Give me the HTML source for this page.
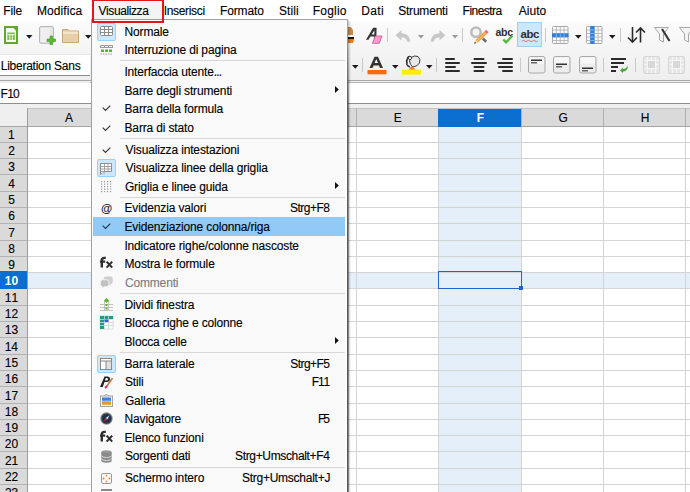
<!DOCTYPE html><html><head><meta charset="utf-8"><style>
html,body{margin:0;padding:0;}
body{width:690px;height:492px;overflow:hidden;position:relative;background:#fff;font-family:"Liberation Sans",sans-serif;}
.t{position:absolute;white-space:nowrap;line-height:20px;font-kerning:none;font-family:"Liberation Sans",sans-serif;}
svg{position:absolute;overflow:visible;}
</style></head><body>
<div style="position:absolute;left:0px;top:22px;width:690px;height:58px;background:linear-gradient(#fbfbfb,#f3f3f3 60%,#eeeeee)"></div>
<div style="position:absolute;left:0px;top:54px;width:90px;height:21px;background:#fff;border-top:1px solid #e6e6e6"></div>
<div style="position:absolute;left:0px;top:75px;width:90px;height:1px;background:#8c8c8c"></div>
<div style="position:absolute;left:0px;top:80px;width:690px;height:1px;background:#a8a8a8"></div>
<div style="position:absolute;left:0px;top:81px;width:690px;height:2px;background:#eeeeee"></div>
<div style="position:absolute;left:0px;top:83px;width:690px;height:20px;background:#fff"></div>
<div style="position:absolute;left:90px;top:82px;width:600px;height:1px;background:#b4b4b4"></div>
<div style="position:absolute;left:0px;top:103px;width:690px;height:1px;background:#8e8e8e"></div>
<div style="position:absolute;left:0px;top:104px;width:690px;height:5px;background:#f0f0f0"></div>
<div style="position:absolute;left:92px;top:0px;width:72px;height:20px;background:#f4f4f4"></div>
<div class="t" style="left:3.22px;top:1.00px;font-size:12px;letter-spacing:-0.106px;color:#000;-webkit-text-stroke:0.12px #000;">File</div>
<div class="t" style="left:36.92px;top:1.00px;font-size:12px;letter-spacing:0.100px;color:#000;-webkit-text-stroke:0.12px #000;">Modifica</div>
<div class="t" style="left:98.45px;top:1.00px;font-size:12px;letter-spacing:-0.397px;color:#000;-webkit-text-stroke:0.12px #000;">Visualizza</div>
<div class="t" style="left:163.79px;top:1.00px;font-size:12px;letter-spacing:-0.337px;color:#000;-webkit-text-stroke:0.12px #000;">Inserisci</div>
<div class="t" style="left:219.92px;top:1.00px;font-size:12px;letter-spacing:-0.098px;color:#000;-webkit-text-stroke:0.12px #000;">Formato</div>
<div class="t" style="left:278.96px;top:1.00px;font-size:12px;letter-spacing:0.079px;color:#000;-webkit-text-stroke:0.12px #000;">Stili</div>
<div class="t" style="left:312.82px;top:1.00px;font-size:12px;letter-spacing:0.181px;color:#000;-webkit-text-stroke:0.12px #000;">Foglio</div>
<div class="t" style="left:361.22px;top:1.00px;font-size:12px;letter-spacing:0.351px;color:#000;-webkit-text-stroke:0.12px #000;">Dati</div>
<div class="t" style="left:398.16px;top:1.00px;font-size:12px;letter-spacing:-0.200px;color:#000;-webkit-text-stroke:0.12px #000;">Strumenti</div>
<div class="t" style="left:462.62px;top:1.00px;font-size:12px;letter-spacing:-0.538px;color:#000;-webkit-text-stroke:0.12px #000;">Finestra</div>
<div class="t" style="left:518.68px;top:1.00px;font-size:12px;letter-spacing:0.044px;color:#000;-webkit-text-stroke:0.12px #000;">Aiuto</div>
<div style="position:absolute;left:0px;top:104px;width:27px;height:22px;background:#efefef"></div>
<div style="position:absolute;left:27px;top:108px;width:663px;height:18px;background:#dadada"></div>
<div style="position:absolute;left:27px;top:108px;width:663px;height:1px;background:#c4c4c4"></div>
<div style="position:absolute;left:0px;top:126px;width:690px;height:1px;background:#a6a6a6"></div>
<div style="position:absolute;left:0px;top:127px;width:27px;height:365px;background:#dadada"></div>
<div style="position:absolute;left:27px;top:108px;width:1px;height:384px;background:#9c9c9c"></div>
<div style="position:absolute;left:438px;top:127px;width:83px;height:365px;background:#e4effa"></div>
<div style="position:absolute;left:28px;top:272px;width:662px;height:16px;background:#e4effa"></div>
<div style="position:absolute;left:0px;top:142px;width:27px;height:1px;background:#b2b2b2"></div>
<div style="position:absolute;left:28px;top:142px;width:662px;height:1px;background:#d4d4d4"></div>
<div style="position:absolute;left:0px;top:158px;width:27px;height:1px;background:#b2b2b2"></div>
<div style="position:absolute;left:28px;top:158px;width:662px;height:1px;background:#d4d4d4"></div>
<div style="position:absolute;left:0px;top:174px;width:27px;height:1px;background:#b2b2b2"></div>
<div style="position:absolute;left:28px;top:174px;width:662px;height:1px;background:#d4d4d4"></div>
<div style="position:absolute;left:0px;top:191px;width:27px;height:1px;background:#b2b2b2"></div>
<div style="position:absolute;left:28px;top:191px;width:662px;height:1px;background:#d4d4d4"></div>
<div style="position:absolute;left:0px;top:207px;width:27px;height:1px;background:#b2b2b2"></div>
<div style="position:absolute;left:28px;top:207px;width:662px;height:1px;background:#d4d4d4"></div>
<div style="position:absolute;left:0px;top:223px;width:27px;height:1px;background:#b2b2b2"></div>
<div style="position:absolute;left:28px;top:223px;width:662px;height:1px;background:#d4d4d4"></div>
<div style="position:absolute;left:0px;top:240px;width:27px;height:1px;background:#b2b2b2"></div>
<div style="position:absolute;left:28px;top:240px;width:662px;height:1px;background:#d4d4d4"></div>
<div style="position:absolute;left:0px;top:256px;width:27px;height:1px;background:#b2b2b2"></div>
<div style="position:absolute;left:28px;top:256px;width:662px;height:1px;background:#d4d4d4"></div>
<div style="position:absolute;left:0px;top:272px;width:27px;height:1px;background:#b2b2b2"></div>
<div style="position:absolute;left:28px;top:272px;width:662px;height:1px;background:#d4d4d4"></div>
<div style="position:absolute;left:0px;top:288px;width:27px;height:1px;background:#b2b2b2"></div>
<div style="position:absolute;left:28px;top:288px;width:662px;height:1px;background:#d4d4d4"></div>
<div style="position:absolute;left:0px;top:305px;width:27px;height:1px;background:#b2b2b2"></div>
<div style="position:absolute;left:28px;top:305px;width:662px;height:1px;background:#d4d4d4"></div>
<div style="position:absolute;left:0px;top:321px;width:27px;height:1px;background:#b2b2b2"></div>
<div style="position:absolute;left:28px;top:321px;width:662px;height:1px;background:#d4d4d4"></div>
<div style="position:absolute;left:0px;top:337px;width:27px;height:1px;background:#b2b2b2"></div>
<div style="position:absolute;left:28px;top:337px;width:662px;height:1px;background:#d4d4d4"></div>
<div style="position:absolute;left:0px;top:354px;width:27px;height:1px;background:#b2b2b2"></div>
<div style="position:absolute;left:28px;top:354px;width:662px;height:1px;background:#d4d4d4"></div>
<div style="position:absolute;left:0px;top:370px;width:27px;height:1px;background:#b2b2b2"></div>
<div style="position:absolute;left:28px;top:370px;width:662px;height:1px;background:#d4d4d4"></div>
<div style="position:absolute;left:0px;top:386px;width:27px;height:1px;background:#b2b2b2"></div>
<div style="position:absolute;left:28px;top:386px;width:662px;height:1px;background:#d4d4d4"></div>
<div style="position:absolute;left:0px;top:403px;width:27px;height:1px;background:#b2b2b2"></div>
<div style="position:absolute;left:28px;top:403px;width:662px;height:1px;background:#d4d4d4"></div>
<div style="position:absolute;left:0px;top:419px;width:27px;height:1px;background:#b2b2b2"></div>
<div style="position:absolute;left:28px;top:419px;width:662px;height:1px;background:#d4d4d4"></div>
<div style="position:absolute;left:0px;top:435px;width:27px;height:1px;background:#b2b2b2"></div>
<div style="position:absolute;left:28px;top:435px;width:662px;height:1px;background:#d4d4d4"></div>
<div style="position:absolute;left:0px;top:451px;width:27px;height:1px;background:#b2b2b2"></div>
<div style="position:absolute;left:28px;top:451px;width:662px;height:1px;background:#d4d4d4"></div>
<div style="position:absolute;left:0px;top:468px;width:27px;height:1px;background:#b2b2b2"></div>
<div style="position:absolute;left:28px;top:468px;width:662px;height:1px;background:#d4d4d4"></div>
<div style="position:absolute;left:0px;top:484px;width:27px;height:1px;background:#b2b2b2"></div>
<div style="position:absolute;left:28px;top:484px;width:662px;height:1px;background:#d4d4d4"></div>
<div style="position:absolute;left:109px;top:108px;width:1px;height:18px;background:#b0b0b0"></div>
<div style="position:absolute;left:109px;top:127px;width:1px;height:365px;background:#d4d4d4"></div>
<div style="position:absolute;left:192px;top:108px;width:1px;height:18px;background:#b0b0b0"></div>
<div style="position:absolute;left:192px;top:127px;width:1px;height:365px;background:#d4d4d4"></div>
<div style="position:absolute;left:274px;top:108px;width:1px;height:18px;background:#b0b0b0"></div>
<div style="position:absolute;left:274px;top:127px;width:1px;height:365px;background:#d4d4d4"></div>
<div style="position:absolute;left:356px;top:108px;width:1px;height:18px;background:#b0b0b0"></div>
<div style="position:absolute;left:356px;top:127px;width:1px;height:365px;background:#d4d4d4"></div>
<div style="position:absolute;left:438px;top:108px;width:1px;height:18px;background:#b0b0b0"></div>
<div style="position:absolute;left:438px;top:127px;width:1px;height:365px;background:#d4d4d4"></div>
<div style="position:absolute;left:521px;top:108px;width:1px;height:18px;background:#b0b0b0"></div>
<div style="position:absolute;left:521px;top:127px;width:1px;height:365px;background:#d4d4d4"></div>
<div style="position:absolute;left:603px;top:108px;width:1px;height:18px;background:#b0b0b0"></div>
<div style="position:absolute;left:603px;top:127px;width:1px;height:365px;background:#d4d4d4"></div>
<div style="position:absolute;left:685px;top:108px;width:1px;height:18px;background:#b0b0b0"></div>
<div style="position:absolute;left:685px;top:127px;width:1px;height:365px;background:#d4d4d4"></div>
<div style="position:absolute;left:438px;top:108.5px;width:83px;height:18px;background:#0a6fd0"></div>
<div style="position:absolute;left:0px;top:270.5px;width:27px;height:18.5px;background:#0a6fd0"></div>
<div class="t" style="left:65.00px;top:108.00px;font-size:12px;letter-spacing:0.000px;color:#000;-webkit-text-stroke:0.12px #000;">A</div>
<div class="t" style="left:147.32px;top:108.00px;font-size:12px;letter-spacing:0.000px;color:#000;-webkit-text-stroke:0.12px #000;">B</div>
<div class="t" style="left:229.59px;top:108.00px;font-size:12px;letter-spacing:0.000px;color:#000;-webkit-text-stroke:0.12px #000;">C</div>
<div class="t" style="left:311.46px;top:108.00px;font-size:12px;letter-spacing:0.000px;color:#000;-webkit-text-stroke:0.12px #000;">D</div>
<div class="t" style="left:393.76px;top:108.00px;font-size:12px;letter-spacing:0.000px;color:#000;-webkit-text-stroke:0.12px #000;">E</div>
<div class="t" style="left:476.65px;top:108.00px;font-size:12px;letter-spacing:0.000px;color:#fff;font-weight:bold;">F</div>
<div class="t" style="left:558.48px;top:108.00px;font-size:12px;letter-spacing:0.000px;color:#000;-webkit-text-stroke:0.12px #000;">G</div>
<div class="t" style="left:640.66px;top:108.00px;font-size:12px;letter-spacing:0.000px;color:#000;-webkit-text-stroke:0.12px #000;">H</div>
<div class="t" style="left:8.10px;top:125.00px;font-size:12px;letter-spacing:0.000px;color:#000;-webkit-text-stroke:0.12px #000;">1</div>
<div class="t" style="left:8.26px;top:141.00px;font-size:12px;letter-spacing:0.000px;color:#000;-webkit-text-stroke:0.12px #000;">2</div>
<div class="t" style="left:8.30px;top:157.00px;font-size:12px;letter-spacing:0.000px;color:#000;-webkit-text-stroke:0.12px #000;">3</div>
<div class="t" style="left:8.30px;top:174.00px;font-size:12px;letter-spacing:0.000px;color:#000;-webkit-text-stroke:0.12px #000;">4</div>
<div class="t" style="left:8.27px;top:190.00px;font-size:12px;letter-spacing:0.000px;color:#000;-webkit-text-stroke:0.12px #000;">5</div>
<div class="t" style="left:8.22px;top:206.00px;font-size:12px;letter-spacing:0.000px;color:#000;-webkit-text-stroke:0.12px #000;">6</div>
<div class="t" style="left:8.26px;top:223.00px;font-size:12px;letter-spacing:0.000px;color:#000;-webkit-text-stroke:0.12px #000;">7</div>
<div class="t" style="left:8.26px;top:239.00px;font-size:12px;letter-spacing:0.000px;color:#000;-webkit-text-stroke:0.12px #000;">8</div>
<div class="t" style="left:8.27px;top:255.00px;font-size:12px;letter-spacing:0.000px;color:#000;-webkit-text-stroke:0.12px #000;">9</div>
<div class="t" style="left:4.79px;top:271.00px;font-size:12px;letter-spacing:0.000px;color:#fff;font-weight:bold;">10</div>
<div class="t" style="left:4.76px;top:288.00px;font-size:12px;letter-spacing:0.000px;color:#000;-webkit-text-stroke:0.12px #000;">11</div>
<div class="t" style="left:4.77px;top:304.00px;font-size:12px;letter-spacing:0.000px;color:#000;-webkit-text-stroke:0.12px #000;">12</div>
<div class="t" style="left:4.73px;top:320.00px;font-size:12px;letter-spacing:0.000px;color:#000;-webkit-text-stroke:0.12px #000;">13</div>
<div class="t" style="left:4.64px;top:337.00px;font-size:12px;letter-spacing:0.000px;color:#000;-webkit-text-stroke:0.12px #000;">14</div>
<div class="t" style="left:4.72px;top:353.00px;font-size:12px;letter-spacing:0.000px;color:#000;-webkit-text-stroke:0.12px #000;">15</div>
<div class="t" style="left:4.73px;top:369.00px;font-size:12px;letter-spacing:0.000px;color:#000;-webkit-text-stroke:0.12px #000;">16</div>
<div class="t" style="left:4.77px;top:386.00px;font-size:12px;letter-spacing:0.000px;color:#000;-webkit-text-stroke:0.12px #000;">17</div>
<div class="t" style="left:4.73px;top:402.00px;font-size:12px;letter-spacing:0.000px;color:#000;-webkit-text-stroke:0.12px #000;">18</div>
<div class="t" style="left:4.75px;top:418.00px;font-size:12px;letter-spacing:0.000px;color:#000;-webkit-text-stroke:0.12px #000;">19</div>
<div class="t" style="left:4.86px;top:434.00px;font-size:12px;letter-spacing:0.000px;color:#000;-webkit-text-stroke:0.12px #000;">20</div>
<div class="t" style="left:4.92px;top:451.00px;font-size:12px;letter-spacing:0.000px;color:#000;-webkit-text-stroke:0.12px #000;">21</div>
<div class="t" style="left:4.93px;top:467.00px;font-size:12px;letter-spacing:0.000px;color:#000;-webkit-text-stroke:0.12px #000;">22</div>
<div class="t" style="left:4.89px;top:483.00px;font-size:12px;letter-spacing:0.000px;color:#000;-webkit-text-stroke:0.12px #000;">23</div>
<div style="position:absolute;left:438px;top:271px;width:84px;height:18px;border:1.5px solid #1f63d3;box-sizing:border-box"></div>
<div style="position:absolute;left:519px;top:286px;width:4px;height:4px;background:#1f63d3"></div>
<div class="t" style="left:0.72px;top:56.00px;font-size:12px;letter-spacing:-0.248px;color:#000;-webkit-text-stroke:0.12px #000;">Liberation Sans</div>
<div class="t" style="left:0.62px;top:84.00px;font-size:12px;letter-spacing:-0.762px;color:#000;-webkit-text-stroke:0.12px #000;">F10</div>
<svg style="left:4px;top:26px" width="14" height="18" viewBox="0 0 14 18"><rect x="0" y="0" width="14" height="18" fill="#5fa82c"/><path d="M2 2H9.5L12 4.5V16H2Z" fill="#f6faf2"/><rect x="3.3" y="6.5" width="7.5" height="7.5" fill="#7fbf4f"/><path d="M3.3 8.6H10.8M5.8 8.6V14M8.3 8.6V14" stroke="#f6faf2" stroke-width="0.9"/></svg>
<svg style="left:25.5px;top:35px" width="7" height="4" viewBox="0 0 7 4"><path d="M0 0H6.5L3.25 3.8Z" fill="#1a1a1a"/></svg>
<svg style="left:39px;top:26px" width="18" height="19" viewBox="0 0 18 19"><rect x="0.5" y="0.5" width="14" height="16.8" rx="1.5" fill="#e4e4e4" stroke="#b8b8b8"/><rect x="2" y="2" width="9" height="14" fill="#efefef"/><path d="M11 10V13H8V15.5H11V18.5H13.5V15.5H16.5V13H13.5V10Z" fill="#5db836" stroke="#3f9a20" stroke-width="0.6"/></svg>
<svg style="left:62px;top:28px" width="18" height="15" viewBox="0 0 18 15"><path d="M0.5 1.5H6L7.5 3H16.5V14.5H0.5Z" fill="#e3c69c" stroke="#c9a878"/><rect x="1" y="3.5" width="15" height="3" fill="#f3e4cc"/><rect x="1" y="6" width="15" height="8" fill="#e8cfa8"/></svg>
<svg style="left:85px;top:35px" width="7" height="4" viewBox="0 0 7 4"><path d="M0 0H6.5L3.25 3.8Z" fill="#1a1a1a"/></svg>
<svg style="left:348px;top:26px" width="8" height="18" viewBox="0 0 8 18"><path d="M0 1H3L5 4V9H0Z" fill="#c98a48"/><rect x="0" y="9" width="6" height="2" fill="#fff"/><rect x="0" y="11" width="6" height="2.5" fill="#1a1a1a"/><path d="M0 13.5H6L5 17H0Z" fill="#f07a10"/></svg>
<svg style="left:365px;top:27px" width="18" height="17" viewBox="0 0 18 17"><path fill-rule="evenodd" d="M1 12.8L8.2 0.8H11.6L11.3 12.8H9.1L9.2 9.6H5.4L3.5 12.8Z M6.6 7.6H9.3L9.5 3.2Z" fill="#333"/><path d="M7.5 16.3L10.3 9H17L14.2 16.3Z" fill="#f5a0cc" stroke="#e2559e" stroke-width="0.9" stroke-linejoin="round"/></svg>
<div style="position:absolute;left:387px;top:28px;width:1px;height:14px;background:#c8c8c8"></div>
<svg style="left:395px;top:30px" width="16" height="12" viewBox="0 0 16 12"><path d="M6.5 0L0.5 5.2L6.5 10.4V7.2C9.5 7.2 11.5 8.5 12.3 11.8H15.2C15 6.5 11.5 3.4 6.5 3.3Z" fill="#c8c8c8"/></svg>
<svg style="left:418px;top:35px" width="7" height="4" viewBox="0 0 7 4"><path d="M0 0H6L3 3.5Z" fill="#9a9a9a"/></svg>
<svg style="left:430px;top:30px" width="16" height="12" viewBox="0 0 16 12"><path d="M9.5 0L15.5 5.2L9.5 10.4V7.2C6.5 7.2 4.5 8.5 3.7 11.8H0.8C1 6.5 4.5 3.4 9.5 3.3Z" fill="#c8c8c8"/></svg>
<svg style="left:452px;top:35px" width="7" height="4" viewBox="0 0 7 4"><path d="M0 0H6L3 3.5Z" fill="#9a9a9a"/></svg>
<div style="position:absolute;left:462px;top:28px;width:1px;height:14px;background:#c8c8c8"></div>
<svg style="left:469px;top:25px" width="20" height="20" viewBox="0 0 20 20"><circle cx="7" cy="7.2" r="4.7" fill="#f6f6f6" stroke="#bcbcbc" stroke-width="2.6"/><path d="M13.8 13.5L17.2 16.8" stroke="#6e6e6e" stroke-width="2.6"/><path d="M7.8 16.2L16.8 7.6" stroke="#eea13a" stroke-width="3.4"/><path d="M7.8 16.2L16.8 7.6" stroke="#f9c46a" stroke-width="1"/><path d="M16.8 7.6L18.4 6" stroke="#f0609a" stroke-width="3.4"/><path d="M5.2 18.8L6.3 14.9L9.3 17.6Z" fill="#f3d9a8"/><path d="M5.2 18.8L5.8 16.7L7.2 18Z" fill="#222"/></svg>
<svg style="left:495px;top:27px" width="20" height="17" viewBox="0 0 20 17"><text x="0.5" y="8.6" font-family="Liberation Sans" font-weight="bold" font-size="10.5" letter-spacing="-0.3" fill="#2e2e2e">abc</text><path d="M8.3 12.5L11 15.3L17.5 8.8" stroke="#52b83c" stroke-width="2.3" fill="none"/></svg>
<div style="position:absolute;left:517px;top:22px;width:25px;height:25px;background:#cce8ff;border:1px solid #99d1ff;box-sizing:border-box"></div>
<svg style="left:520px;top:28px" width="20" height="16" viewBox="0 0 20 16"><text x="0.5" y="10" font-family="Liberation Sans" font-weight="bold" font-size="11.5" letter-spacing="-0.4" fill="#2e2e2e">abc</text><path d="M2 13Q3.3 11.8 4.6 13T7.2 13T9.8 13T12.4 13T15 13T17.6 13" stroke="#f05a5a" stroke-width="0.9" fill="none"/></svg>
<div style="position:absolute;left:545px;top:28px;width:1px;height:14px;background:#c8c8c8"></div>
<svg style="left:552px;top:26px" width="17" height="18" viewBox="0 0 17 18"><rect x="0.5" y="0.5" width="15.5" height="17" rx="1" fill="#fcfcfc" stroke="#a8a8a8"/><path d="M0.5 4H16M0.5 7.5H16M0.5 11H16M0.5 14.5H16M4.4 0.5V17.5M8.25 0.5V17.5M12.1 0.5V17.5" stroke="#b4b4b4" stroke-width="0.9"/><rect x="0" y="7.3" width="16.5" height="3.9" fill="#2f80dc"/><path d="M4.4 7.5V11M8.25 7.5V11M12.1 7.5V11" stroke="#8cc0f4" stroke-width="0.9"/></svg>
<svg style="left:575px;top:35px" width="7" height="4" viewBox="0 0 7 4"><path d="M0 0H6.5L3.25 3.8Z" fill="#1a1a1a"/></svg>
<svg style="left:586px;top:26px" width="17" height="18" viewBox="0 0 17 18"><rect x="0.5" y="0.5" width="15.5" height="17" rx="1" fill="#fcfcfc" stroke="#a8a8a8"/><path d="M0.5 4H16M0.5 7.5H16M0.5 11H16M0.5 14.5H16M4.4 0.5V17.5M8.25 0.5V17.5M12.1 0.5V17.5" stroke="#b4b4b4" stroke-width="0.9"/><rect x="4.2" y="0" width="4.3" height="18" fill="#2f80dc"/><path d="M4.4 4H8.3M4.4 7.5H8.3M4.4 11H8.3M4.4 14.5H8.3" stroke="#8cc0f4" stroke-width="0.9"/></svg>
<svg style="left:609px;top:35px" width="7" height="4" viewBox="0 0 7 4"><path d="M0 0H6.5L3.25 3.8Z" fill="#1a1a1a"/></svg>
<div style="position:absolute;left:620px;top:28px;width:1px;height:14px;background:#c8c8c8"></div>
<svg style="left:627px;top:27px" width="20" height="16" viewBox="0 0 20 16"><path d="M5.5 0V15M1 10.5L5.5 15L10 10.5M13.5 15.5V1M9 5.5L13.5 1L18 5.5" stroke="#2a2a2a" stroke-width="1.6" fill="none"/></svg>
<svg style="left:654px;top:27px" width="17" height="16" viewBox="0 0 17 16"><path d="M0.5 0.5H14.5L9.5 7V15L5.5 13V7Z" fill="#f4f4f4" stroke="#a8a8a8"/><path d="M8 2L15.5 14" stroke="#333" stroke-width="2"/></svg>
<svg style="left:679px;top:27px" width="17" height="16" viewBox="0 0 17 16"><path d="M0.5 0.5H14.5L9.5 7V15L5.5 13V7Z" fill="#f4f4f4" stroke="#a8a8a8"/></svg>
<svg style="left:351.5px;top:65px" width="7" height="4" viewBox="0 0 7 4"><path d="M0 0H6.5L3.25 3.8Z" fill="#1a1a1a"/></svg>
<div style="position:absolute;left:362px;top:58px;width:1px;height:14px;background:#c8c8c8"></div>
<svg style="left:367px;top:56px" width="20" height="19" viewBox="0 0 20 19"><path d="M2.5 12L7.5 0.8H11L16 12H13L12 9.5H6.6L5.5 12Z M7.5 7H11L9.25 3Z" fill="#333"/><rect x="0.5" y="14" width="19" height="4.3" fill="#ff6a00"/></svg>
<svg style="left:391.5px;top:65px" width="7" height="4" viewBox="0 0 7 4"><path d="M0 0H6.5L3.25 3.8Z" fill="#1a1a1a"/></svg>
<svg style="left:402px;top:55px" width="20" height="20" viewBox="0 0 20 20"><path d="M9 2.5Q12.5 0 16 1.5Q19 4 17.5 8Q15.5 11.5 11 12Q8 10 7.5 6Z" fill="#e8e8e8" stroke="#3a3a3a" stroke-width="1"/><path d="M8.5 1.8Q6 1 5.5 3.5Q4 6 5 9.5Q6 11.5 8 12" fill="none" stroke="#333" stroke-width="1.6"/><circle cx="8" cy="3" r="1.6" fill="#fff" stroke="#333" stroke-width="0.9"/><path d="M6.5 14.8Q8.5 12 10 11Q11 12.5 14 14.8Z" fill="#e8801c"/><rect x="0" y="14.7" width="19" height="5" fill="#ffee00"/></svg>
<svg style="left:426px;top:65px" width="7" height="4" viewBox="0 0 7 4"><path d="M0 0H6.5L3.25 3.8Z" fill="#1a1a1a"/></svg>
<div style="position:absolute;left:436px;top:58px;width:1px;height:14px;background:#c8c8c8"></div>
<svg style="left:445px;top:58px" width="17" height="16" viewBox="0 0 17 16"><rect x="0" y="0" width="10" height="2" rx="1" fill="#2a2a2a"/><rect x="0" y="4" width="15" height="2" rx="1" fill="#2a2a2a"/><rect x="0" y="8" width="11" height="2" rx="1" fill="#2a2a2a"/><rect x="0" y="12" width="15" height="2" rx="1" fill="#2a2a2a"/></svg>
<svg style="left:471px;top:58px" width="17" height="16" viewBox="0 0 17 16"><rect x="2.5" y="0" width="11" height="2" rx="1" fill="#2a2a2a"/><rect x="0" y="4" width="16" height="2" rx="1" fill="#2a2a2a"/><rect x="2.5" y="8" width="11" height="2" rx="1" fill="#2a2a2a"/><rect x="2.5" y="12" width="11" height="2" rx="1" fill="#2a2a2a"/></svg>
<svg style="left:496.5px;top:58px" width="17" height="16" viewBox="0 0 17 16"><rect x="5" y="0" width="11" height="2" rx="1" fill="#2a2a2a"/><rect x="0" y="4" width="16" height="2" rx="1" fill="#2a2a2a"/><rect x="1" y="8" width="15" height="2" rx="1" fill="#2a2a2a"/><rect x="5" y="12" width="11" height="2" rx="1" fill="#2a2a2a"/></svg>
<div style="position:absolute;left:519.5px;top:58px;width:1px;height:14px;background:#c8c8c8"></div>
<svg style="left:527.5px;top:56px" width="18" height="18" viewBox="0 0 18 18"><rect x="0.5" y="0.5" width="16.5" height="16.5" rx="2" fill="#ececec" stroke="#a8a8a8"/><rect x="1.5" y="1.5" width="14.5" height="6" fill="#f8f8f8"/><rect x="3" y="3.5" width="11" height="1.5" fill="#333"/><rect x="3" y="6.0" width="6" height="1.5" fill="#666"/></svg>
<svg style="left:553px;top:56px" width="18" height="18" viewBox="0 0 18 18"><rect x="0.5" y="0.5" width="16.5" height="16.5" rx="2" fill="#ececec" stroke="#a8a8a8"/><rect x="1.5" y="1.5" width="14.5" height="6" fill="#f8f8f8"/><rect x="3" y="7.5" width="11" height="1.5" fill="#333"/><rect x="3" y="10.0" width="6" height="1.5" fill="#666"/></svg>
<svg style="left:579px;top:56px" width="18" height="18" viewBox="0 0 18 18"><rect x="0.5" y="0.5" width="16.5" height="16.5" rx="2" fill="#ececec" stroke="#a8a8a8"/><rect x="1.5" y="1.5" width="14.5" height="6" fill="#f8f8f8"/><rect x="3" y="11.5" width="11" height="1.5" fill="#333"/><rect x="3" y="14.0" width="6" height="1.5" fill="#666"/></svg>
<div style="position:absolute;left:602.5px;top:58px;width:1px;height:14px;background:#c8c8c8"></div>
<svg style="left:611px;top:58px" width="18" height="15" viewBox="0 0 18 15"><rect x="0" y="0" width="15" height="2" fill="#2a2a2a"/><rect x="0" y="4" width="13" height="2" fill="#2a2a2a"/><rect x="0" y="8" width="7" height="2" fill="#2a2a2a"/><rect x="0" y="12" width="5" height="2" fill="#2a2a2a"/><path d="M9 12.5L12 9.5L12 11C14 11 16 10 16.5 7.5C17.5 11 15 13.5 12 13.5V15Z" fill="#4aa83a"/></svg>
<div style="position:absolute;left:634.5px;top:58px;width:1px;height:14px;background:#c8c8c8"></div>
<svg style="left:642.5px;top:56px" width="17" height="18" viewBox="0 0 17 18"><rect x="0.5" y="0.5" width="16" height="17" rx="1.5" fill="#e6e6e6" stroke="#d6d6d6"/><path d="M4.5 1V17M8.5 1V17M12.5 1V17M1 4.5H16M1 8.5H16M1 12.5H16" stroke="#f6f6f6" stroke-width="1.1"/><rect x="5" y="5" width="7" height="7" fill="#d8d8d8"/></svg>
<svg style="left:668px;top:56px" width="17" height="18" viewBox="0 0 17 18"><rect x="0.5" y="0.5" width="16" height="17" rx="1.5" fill="#e6e6e6" stroke="#d6d6d6"/><path d="M4.5 1V17M8.5 1V17M12.5 1V17M1 4.5H16M1 8.5H16M1 12.5H16" stroke="#f6f6f6" stroke-width="1.1"/><rect x="5" y="5" width="7" height="7" fill="#d8d8d8"/></svg>
<div style="position:absolute;left:91px;top:19px;width:256px;height:473px;background:#f9f9f9;border-left:1px solid #a0a0a0;border-top:1px solid #a0a0a0;box-sizing:border-box"></div>
<div style="position:absolute;left:345px;top:20px;width:2px;height:472px;background:#fdfdfd"></div>
<div style="position:absolute;left:347px;top:19px;width:1px;height:473px;background:linear-gradient(#a8a8a8,#606060 80px,#585858)"></div>
<div style="position:absolute;left:348px;top:20px;width:1px;height:472px;background:linear-gradient(rgba(0,0,0,0.15),rgba(0,0,0,0.45) 80px,rgba(0,0,0,0.5))"></div>
<div style="position:absolute;left:349px;top:21px;width:2px;height:471px;background:linear-gradient(90deg,rgba(0,0,0,0.18),rgba(0,0,0,0))"></div>
<div style="position:absolute;left:92px;top:-1px;width:72px;height:24px;border:2px solid #e8141c;box-sizing:border-box"></div>
<div style="position:absolute;left:97px;top:22.5px;width:19px;height:18.5px;background:#cce8ff;border:1px solid #99d1ff;box-sizing:border-box;border-radius:2px"></div>
<svg style="left:100px;top:26px" width="13" height="10" viewBox="0 0 13 10"><rect x="0.5" y="0.5" width="12" height="9" rx="1" fill="#fff" stroke="#8a8a8a"/><path d="M0.5 3.5H12.5M0.5 6.5H12.5M4.5 0.5V9.5M8.5 0.5V9.5" stroke="#8a8a8a"/></svg>
<div class="t" style="left:124.52px;top:22.00px;font-size:12px;letter-spacing:-0.150px;color:#000;-webkit-text-stroke:0.12px #000;">Normale</div>
<svg style="left:100px;top:45px" width="13" height="10" viewBox="0 0 13 10"><path d="M0.5 3V0.5H4M4.5 0.5H8M8.5 0.5H12.5V3M4.5 0.5V3M8.5 0.5V3M0.5 2.5H12.5" stroke="#9a9a9a" fill="none"/><rect x="1" y="4.5" width="3" height="2.5" fill="#5db42a"/><rect x="5" y="4.5" width="3" height="2.5" fill="#5db42a"/><rect x="9" y="4.5" width="3" height="2.5" fill="#5db42a"/><path d="M0.5 9H12.5" stroke="#9a9a9a" stroke-dasharray="1.5 1"/></svg>
<div class="t" style="left:124.39px;top:40.00px;font-size:12px;letter-spacing:-0.150px;color:#000;-webkit-text-stroke:0.12px #000;">Interruzione di pagina</div>
<div style="position:absolute;left:120px;top:60px;width:225px;height:1px;background:#d8d8d8"></div>
<div class="t" style="left:124.39px;top:62.00px;font-size:12px;letter-spacing:-0.150px;color:#000;-webkit-text-stroke:0.12px #000;">Interfaccia utente</div>
<div class="t" style="left:213.70px;top:62.00px;font-size:12px;letter-spacing:-0.805px;color:#000;-webkit-text-stroke:0.12px #000;">...</div>
<div class="t" style="left:124.52px;top:81.00px;font-size:12px;letter-spacing:-0.150px;color:#000;-webkit-text-stroke:0.12px #000;">Barre degli strumenti</div>
<svg style="left:335px;top:85.5px" width="4" height="7" viewBox="0 0 4 7"><path d="M0 0L3.8 3.5L0 7Z" fill="#111"/></svg>
<svg style="left:102px;top:105px" width="9" height="7" viewBox="0 0 9 7"><path d="M0.7 2.6L3.5 5.4L8.3 0.6" stroke="#3a3a3a" stroke-width="1.25" fill="none"/></svg>
<div class="t" style="left:124.52px;top:99.00px;font-size:12px;letter-spacing:-0.150px;color:#000;-webkit-text-stroke:0.12px #000;">Barra della formula</div>
<svg style="left:102px;top:125px" width="9" height="7" viewBox="0 0 9 7"><path d="M0.7 2.6L3.5 5.4L8.3 0.6" stroke="#3a3a3a" stroke-width="1.25" fill="none"/></svg>
<div class="t" style="left:124.52px;top:118.00px;font-size:12px;letter-spacing:-0.150px;color:#000;-webkit-text-stroke:0.12px #000;">Barra di stato</div>
<div style="position:absolute;left:120px;top:138px;width:225px;height:1px;background:#d8d8d8"></div>
<svg style="left:102px;top:147px" width="9" height="7" viewBox="0 0 9 7"><path d="M0.7 2.6L3.5 5.4L8.3 0.6" stroke="#3a3a3a" stroke-width="1.25" fill="none"/></svg>
<div class="t" style="left:125.45px;top:140.00px;font-size:12px;letter-spacing:-0.150px;color:#000;-webkit-text-stroke:0.12px #000;">Visualizza intestazioni</div>
<div style="position:absolute;left:97px;top:158.5px;width:19px;height:18.5px;background:#cce8ff;border:1px solid #99d1ff;box-sizing:border-box;border-radius:2px"></div>
<svg style="left:100px;top:163px" width="12" height="12" viewBox="0 0 12 12"><path d="M0.5 0.5H11.5V8.5H4L0.5 11.5Z" fill="#fff" stroke="#8c8c8c"/><path d="M0.5 3.5H11.5M0.5 6H11.5M4.5 0.5V8.5M8 0.5V8.5" stroke="#9a9a9a" stroke-width="0.9"/><path d="M0.5 8.5H4V11.5" fill="#e8e8e8" stroke="#8c8c8c" stroke-width="0.8"/></svg>
<div class="t" style="left:125.45px;top:158.00px;font-size:12px;letter-spacing:-0.150px;color:#000;-webkit-text-stroke:0.12px #000;">Visualizza linee della griglia</div>
<svg style="left:101px;top:180.5px" width="11" height="12" viewBox="0 0 11 12"><rect x="0" y="0.0" width="1.2" height="1.2" fill="#9a9a9a"/><rect x="0" y="2.5" width="1.2" height="1.2" fill="#9a9a9a"/><rect x="0" y="5.0" width="1.2" height="1.2" fill="#9a9a9a"/><rect x="0" y="7.5" width="1.2" height="1.2" fill="#9a9a9a"/><rect x="0" y="10.0" width="1.2" height="1.2" fill="#9a9a9a"/><rect x="3" y="0.0" width="1.2" height="1.2" fill="#9a9a9a"/><rect x="3" y="2.5" width="1.2" height="1.2" fill="#9a9a9a"/><rect x="3" y="5.0" width="1.2" height="1.2" fill="#9a9a9a"/><rect x="3" y="7.5" width="1.2" height="1.2" fill="#9a9a9a"/><rect x="3" y="10.0" width="1.2" height="1.2" fill="#9a9a9a"/><rect x="6" y="0.0" width="1.2" height="1.2" fill="#9a9a9a"/><rect x="6" y="2.5" width="1.2" height="1.2" fill="#9a9a9a"/><rect x="6" y="5.0" width="1.2" height="1.2" fill="#9a9a9a"/><rect x="6" y="7.5" width="1.2" height="1.2" fill="#9a9a9a"/><rect x="6" y="10.0" width="1.2" height="1.2" fill="#9a9a9a"/><rect x="9" y="0.0" width="1.2" height="1.2" fill="#9a9a9a"/><rect x="9" y="2.5" width="1.2" height="1.2" fill="#9a9a9a"/><rect x="9" y="5.0" width="1.2" height="1.2" fill="#9a9a9a"/><rect x="9" y="7.5" width="1.2" height="1.2" fill="#9a9a9a"/><rect x="9" y="10.0" width="1.2" height="1.2" fill="#9a9a9a"/></svg>
<div class="t" style="left:124.90px;top:177.00px;font-size:12px;letter-spacing:-0.150px;color:#000;-webkit-text-stroke:0.12px #000;">Griglia e linee guida</div>
<svg style="left:335px;top:181.5px" width="4" height="7" viewBox="0 0 4 7"><path d="M0 0L3.8 3.5L0 7Z" fill="#111"/></svg>
<div style="position:absolute;left:120px;top:197px;width:225px;height:1px;background:#d8d8d8"></div>
<div class="t" style="left:101px;top:198px;font-size:11.5px;font-weight:bold;color:#222;font-kerning:none">@</div>
<div class="t" style="left:124.52px;top:198.00px;font-size:12px;letter-spacing:-0.150px;color:#000;-webkit-text-stroke:0.12px #000;">Evidenzia valori</div>
<div class="t" style="left:290.06px;top:198.00px;font-size:12px;letter-spacing:-0.509px;color:#000;-webkit-text-stroke:0.12px #000;">Strg+F8</div>
<div style="position:absolute;left:93px;top:217px;width:252px;height:18.6px;background:#91c9f7"></div>
<svg style="left:102px;top:223px" width="9" height="7" viewBox="0 0 9 7"><path d="M0.7 2.6L3.5 5.4L8.3 0.6" stroke="#2a3650" stroke-width="1.25" fill="none"/></svg>
<div class="t" style="left:124.52px;top:217.00px;font-size:12px;letter-spacing:-0.150px;color:#000;-webkit-text-stroke:0.12px #000;">Evidenziazione colonna/riga</div>
<div class="t" style="left:124.39px;top:236.00px;font-size:12px;letter-spacing:-0.150px;color:#000;-webkit-text-stroke:0.12px #000;">Indicatore righe/colonne nascoste</div>
<svg style="left:100px;top:257px" width="13" height="11" viewBox="0 0 13 11"><path d="M1.8 10.5V3.4Q1.8 0.9 4.4 0.9H5.8M0 4.6H5.2" stroke="#2e2e2e" stroke-width="2.4" fill="none"/><path d="M6.6 4.6L12.2 10.6M12.2 4.6L6.6 10.6" stroke="#2e2e2e" stroke-width="2.1"/></svg>
<div class="t" style="left:124.52px;top:254.00px;font-size:12px;letter-spacing:-0.150px;color:#000;-webkit-text-stroke:0.12px #000;">Mostra le formule</div>
<svg style="left:100px;top:275.5px" width="13" height="13" viewBox="0 0 13 13"><path d="M6 0.5H10.5Q12.8 0.5 12.8 2.8V5.8Q12.8 8 10.5 8H10.3L11 10.3L8.3 8H6Q3.7 8 3.7 5.8V2.8Q3.7 0.5 6 0.5Z" fill="#cfcfcf"/><path d="M2.6 3.8H6.6Q8.9 3.8 8.9 6V8.6Q8.9 10.8 6.6 10.8H4.3L1.6 12.8L2.3 10.7Q0.3 10.4 0.3 8.6V6Q0.3 3.8 2.6 3.8Z" fill="#c2c2c2" stroke="#f9f9f9" stroke-width="0.8"/></svg>
<div class="t" style="left:124.89px;top:273.00px;font-size:12px;letter-spacing:-0.150px;color:#7c7c7c;-webkit-text-stroke:0.12px #7c7c7c;">Commenti</div>
<div style="position:absolute;left:120px;top:293px;width:225px;height:1px;background:#d8d8d8"></div>
<svg style="left:100px;top:298px" width="14" height="13" viewBox="0 0 14 13"><path d="M0 6.5H13M0 9.5H13M0 12.5H13M4.5 3V13M8.5 3V13" stroke="#c2c2c2"/><path d="M6.5 0L9 2.5L6.5 5L4 2.5Z" fill="#5db42a"/><rect x="5.5" y="6" width="2" height="2" fill="#5db42a"/><rect x="5.5" y="9.5" width="2" height="2" fill="#5db42a"/></svg>
<div class="t" style="left:124.52px;top:295.00px;font-size:12px;letter-spacing:-0.150px;color:#000;-webkit-text-stroke:0.12px #000;">Dividi finestra</div>
<svg style="left:100px;top:315.5px" width="13" height="13" viewBox="0 0 13 13"><rect x="0" y="0" width="13" height="13" fill="#fff" stroke="#bbb" stroke-width="0.5"/><rect x="0" y="0" width="13" height="3" fill="#1e9c86"/><rect x="0" y="0" width="4" height="13" fill="#1e9c86"/><path d="M0 3.5H13M0 6.5H13M0 9.5H13M4.5 0V13M8.5 0V13" stroke="#cfd8d6" stroke-width="0.8"/><rect x="4.5" y="3.5" width="4" height="2.5" fill="#2f64c8"/></svg>
<div class="t" style="left:124.52px;top:313.00px;font-size:12px;letter-spacing:-0.150px;color:#000;-webkit-text-stroke:0.12px #000;">Blocca righe e colonne</div>
<div class="t" style="left:124.52px;top:332.00px;font-size:12px;letter-spacing:-0.150px;color:#000;-webkit-text-stroke:0.12px #000;">Blocca celle</div>
<svg style="left:335px;top:336.5px" width="4" height="7" viewBox="0 0 4 7"><path d="M0 0L3.8 3.5L0 7Z" fill="#111"/></svg>
<div style="position:absolute;left:120px;top:352px;width:225px;height:1px;background:#d8d8d8"></div>
<div style="position:absolute;left:97px;top:354.5px;width:19px;height:18.5px;background:#cce8ff;border:1px solid #99d1ff;box-sizing:border-box;border-radius:2px"></div>
<svg style="left:100px;top:357.5px" width="12" height="12" viewBox="0 0 12 12"><rect x="0.5" y="0.5" width="11" height="11" fill="#fff" stroke="#8a8a8a"/><rect x="6" y="3" width="5" height="8" fill="#e0e0e0"/><path d="M0.5 3H11.5M6 3V11.5" stroke="#8a8a8a"/></svg>
<div class="t" style="left:124.52px;top:354.00px;font-size:12px;letter-spacing:-0.150px;color:#000;-webkit-text-stroke:0.12px #000;">Barra laterale</div>
<div class="t" style="left:290.16px;top:354.00px;font-size:12px;letter-spacing:-0.528px;color:#000;-webkit-text-stroke:0.12px #000;">Strg+F5</div>
<svg style="left:100px;top:376px" width="14" height="12" viewBox="0 0 14 12"><path d="M0 11L4.5 0.5H7.5Q10 0.5 10 3Q10 6 6.5 6H4.5L2.8 11Z M5 4.5H6.5Q8 4.5 8 3Q8 2 6.5 2H5.7Z" fill="#222"/><path d="M6 11.5L12.5 2" stroke="#c07838" stroke-width="1.5"/><path d="M5 12L7 10" stroke="#e0307a" stroke-width="2"/></svg>
<div class="t" style="left:124.96px;top:372.00px;font-size:12px;letter-spacing:-0.150px;color:#000;-webkit-text-stroke:0.12px #000;">Stili</div>
<div class="t" style="left:311.72px;top:372.00px;font-size:12px;letter-spacing:-1.154px;color:#000;-webkit-text-stroke:0.12px #000;">F11</div>
<svg style="left:100px;top:393.5px" width="13" height="13" viewBox="0 0 13 13"><path d="M3.5 2L6 0.3L9.5 2" stroke="#a0a0a0" stroke-width="0.8" fill="none"/><rect x="0.5" y="2" width="12" height="10.5" fill="#f6f6f6" stroke="#a4a4a4"/><rect x="2" y="3.5" width="9" height="4.5" fill="#3d7fe0"/><rect x="2" y="6.5" width="9" height="1.5" fill="#9ab8e8"/><rect x="2" y="8" width="9" height="2.8" fill="#f0922e"/></svg>
<div class="t" style="left:124.90px;top:391.00px;font-size:12px;letter-spacing:-0.150px;color:#000;-webkit-text-stroke:0.12px #000;">Galleria</div>
<svg style="left:100px;top:411.5px" width="13" height="13" viewBox="0 0 13 13"><circle cx="6.5" cy="6.5" r="6.2" fill="#8e8e8e"/><circle cx="6.5" cy="6.5" r="5.2" fill="#3c3c3c"/><circle cx="6.5" cy="6.5" r="4.1" fill="#1a3158"/><path d="M9.6 3.2L7.2 7.4L5.8 6Z" fill="#f4f4f4"/><path d="M3.4 9.8L5.8 6L7.2 7.4Z" fill="#e02a1a"/></svg>
<div class="t" style="left:124.52px;top:409.00px;font-size:12px;letter-spacing:-0.150px;color:#000;-webkit-text-stroke:0.12px #000;">Navigatore</div>
<div class="t" style="left:318.12px;top:409.00px;font-size:12px;letter-spacing:-2.116px;color:#000;-webkit-text-stroke:0.12px #000;">F5</div>
<svg style="left:100px;top:431px" width="13" height="11" viewBox="0 0 13 11"><path d="M1.8 10.5V3.4Q1.8 0.9 4.4 0.9H5.8M0 4.6H5.2" stroke="#2e2e2e" stroke-width="2.4" fill="none"/><path d="M6.6 4.6L12.2 10.6M12.2 4.6L6.6 10.6" stroke="#2e2e2e" stroke-width="2.1"/></svg>
<div class="t" style="left:124.52px;top:428.00px;font-size:12px;letter-spacing:-0.150px;color:#000;-webkit-text-stroke:0.12px #000;">Elenco funzioni</div>
<svg style="left:101px;top:449.5px" width="11" height="13" viewBox="0 0 11 13"><ellipse cx="5.5" cy="2.5" rx="5.2" ry="2.2" fill="#9a9a9a"/><path d="M0.3 2.5V10.5Q0.3 12.7 5.5 12.7Q10.7 12.7 10.7 10.5V2.5" fill="#8a8a8a"/><path d="M0.3 5.5Q0.3 7.5 5.5 7.5Q10.7 7.5 10.7 5.5M0.3 8.5Q0.3 10.5 5.5 10.5Q10.7 10.5 10.7 8.5" stroke="#d8d8d8" fill="none"/></svg>
<div class="t" style="left:124.96px;top:446.00px;font-size:12px;letter-spacing:-0.150px;color:#000;-webkit-text-stroke:0.12px #000;">Sorgenti dati</div>
<div class="t" style="left:235.06px;top:446.00px;font-size:12px;letter-spacing:-0.349px;color:#000;-webkit-text-stroke:0.12px #000;">Strg+Umschalt+F4</div>
<div style="position:absolute;left:120px;top:467px;width:225px;height:1px;background:#d8d8d8"></div>
<svg style="left:101px;top:472.5px" width="11" height="11" viewBox="0 0 11 11"><rect x="0.5" y="0.5" width="10" height="10" rx="1.5" fill="#fafafa" stroke="#9a9a9a"/><circle cx="5.5" cy="2.6" r="0.9" fill="#f0801a"/><circle cx="5.5" cy="8.4" r="0.9" fill="#f0801a"/><circle cx="2.6" cy="5.5" r="0.9" fill="#f0801a"/><circle cx="8.4" cy="5.5" r="0.9" fill="#f0801a"/></svg>
<div class="t" style="left:124.96px;top:468.00px;font-size:12px;letter-spacing:-0.150px;color:#000;-webkit-text-stroke:0.12px #000;">Schermo intero</div>
<div class="t" style="left:241.96px;top:468.00px;font-size:12px;letter-spacing:-0.257px;color:#000;-webkit-text-stroke:0.12px #000;">Strg+Umschalt+J</div>
<div style="position:absolute;left:101px;top:489px;width:11px;height:2px;background:#8a8a8a"></div>
<div class="t" style="left:125.12px;top:487.00px;font-size:12px;letter-spacing:-0.150px;color:#000;-webkit-text-stroke:0.12px #000;">Zoom</div>
<svg style="left:335px;top:491.5px" width="4" height="7" viewBox="0 0 4 7"><path d="M0 0L3.8 3.5L0 7Z" fill="#111"/></svg>
</body></html>
